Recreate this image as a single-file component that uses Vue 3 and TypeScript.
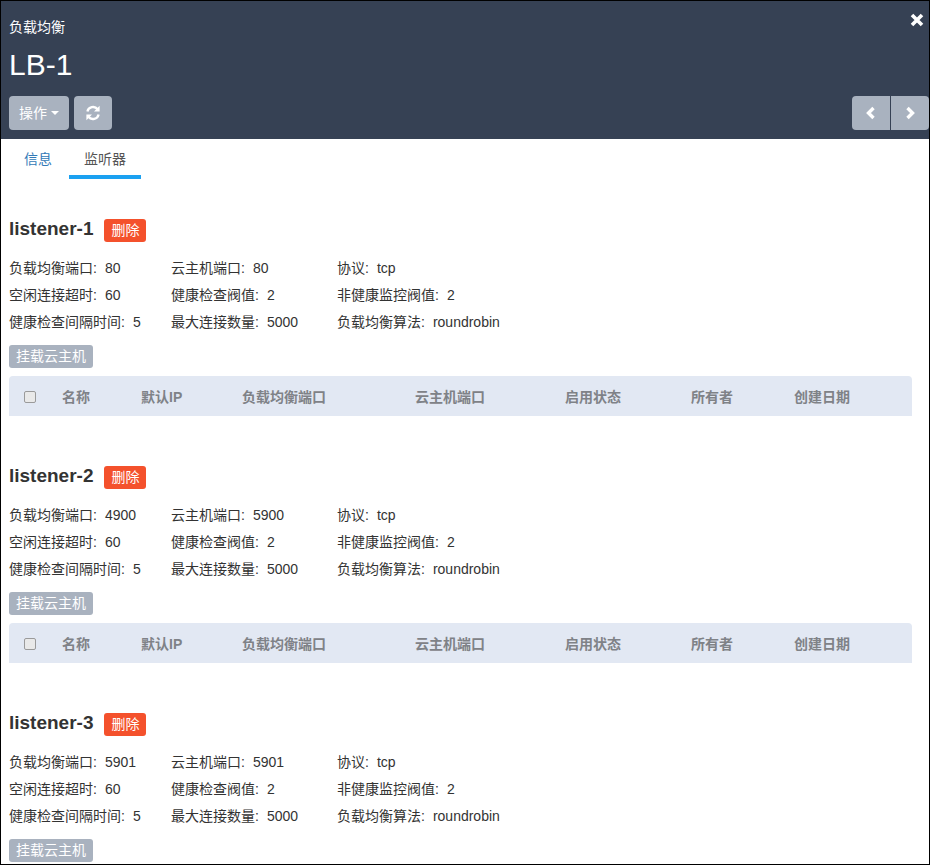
<script setup lang="ts">
interface Listener {
  name: string
  lbPort: number
  hostPort: number
  showHeader: boolean
}
const listeners: Listener[] = [
  { name: 'listener-1', lbPort: 80, hostPort: 80, showHeader: true },
  { name: 'listener-2', lbPort: 4900, hostPort: 5900, showHeader: true },
  { name: 'listener-3', lbPort: 5901, hostPort: 5901, showHeader: false },
]
const columns = ['名称', '默认IP', '负载均衡端口', '云主机端口', '启用状态', '所有者', '创建日期']
function rows(l: Listener): [string, string | number][] {
  return [
    ['负载均衡端口', l.lbPort],
    ['云主机端口', l.hostPort],
    ['协议', 'tcp'],
    ['空闲连接超时', 60],
    ['健康检查阀值', 2],
    ['非健康监控阀值', 2],
    ['健康检查间隔时间', 5],
    ['最大连接数量', 5000],
    ['负载均衡算法', 'roundrobin'],
  ]
}
</script>

<template>
  <div class="panel">
    <header class="head">
      <div class="kicker">负载均衡</div>
      <svg class="close" viewBox="0 0 14 14" width="14" height="14">
        <path d="M2 2 L12 12 M12 2 L2 12" stroke="#fff" stroke-width="3.6" fill="none" />
      </svg>
      <h1 class="title">LB-1</h1>
      <div class="toolbar">
        <div class="group">
          <button class="btn action"><span class="lift">操作</span><span class="caret"></span></button>
          <button class="btn refresh">
            <svg viewBox="0 0 16 16" width="16" height="16" fill="none" stroke="#fff" stroke-width="2.3">
              <path d="M2.4 6.6 A5.8 5.8 0 0 1 12.6 4.2" />
              <path d="M13.6 9.4 A5.8 5.8 0 0 1 3.4 11.8" />
              <path d="M14.6 0.8 V6.4 H9 Z" fill="#fff" stroke="none" />
              <path d="M1.4 15.2 V9.6 H7 Z" fill="#fff" stroke="none" />
            </svg>
          </button>
        </div>
        <div class="pager">
          <button class="btn nav">
            <svg viewBox="0 0 12 14" width="12" height="14" fill="none" stroke="#fff" stroke-width="3.4">
              <path d="M8.5 2 L3.5 7 L8.5 12" />
            </svg>
          </button>
          <button class="btn nav">
            <svg viewBox="0 0 12 14" width="12" height="14" fill="none" stroke="#fff" stroke-width="3.4">
              <path d="M3.5 2 L8.5 7 L3.5 12" />
            </svg>
          </button>
        </div>
      </div>
    </header>

    <nav class="tabs">
      <a class="tab">信息</a>
      <a class="tab active">监听器</a>
    </nav>

    <section v-for="l in listeners" :key="l.name" class="listener">
      <div class="name-row">
        <h2 class="name">{{ l.name }}</h2>
        <button class="del">删除</button>
      </div>
      <div class="facts">
        <div v-for="r in rows(l)" :key="r[0]" class="fact">{{ r[0] }}:<span class="val">{{ r[1] }}</span></div>
      </div>
      <button class="attach">挂载云主机</button>
      <div v-if="l.showHeader" class="thead">
        <div class="cell check"><span class="box"></span></div>
        <div v-for="c in columns" :key="c" class="cell th">{{ c }}</div>
      </div>
    </section>
  </div>
</template>

<style>
html, body { margin: 0; overflow: hidden; background: #fff; }
</style>

<style scoped>
.panel {
  box-sizing: border-box;
  width: 930px;
  height: 865px;
  border: 1px solid #000;
  overflow: hidden;
  background: #fff;
  color: #333;
  font-family: "Liberation Sans", "Noto Sans CJK SC", sans-serif;
  font-size: 14px;
}
.head {
  position: relative;
  height: 138px;
  box-sizing: border-box;
  padding: 17px 0 0 8px;
  background: #364154;
  color: #fff;
}
.kicker { font-size: 14px; line-height: 19px; }
.close { position: absolute; top: 12px; right: 5px; }
.title {
  margin: 8px 0 0;
  font-size: 30px;
  font-weight: 400;
  line-height: 40px;
}
.toolbar {
  margin-top: 11px;
  display: flex;
  justify-content: space-between;
}
.group { display: flex; gap: 5px; }
.pager { display: flex; gap: 1px; background: #364154; }
.btn {
  display: flex;
  align-items: center;
  justify-content: center;
  height: 34px;
  border: 0;
  padding: 0;
  border-radius: 4px;
  background: #a9b2bf;
  color: #fff;
  font: inherit;
  font-size: 14px;
}
.lift { margin-bottom: 2px; }
.action { width: 60px; }
.caret {
  margin-left: 4px;
  border-top: 4px solid #fff;
  border-left: 4px solid transparent;
  border-right: 4px solid transparent;
}
.refresh { width: 38px; }
.nav { width: 38px; }
.nav:first-child { border-radius: 4px 0 0 4px; }
.nav:last-child { border-radius: 0 4px 4px 0; }
.tabs {
  display: flex;
  height: 40px;
  padding-left: 8px;
}
.tab {
  box-sizing: border-box;
  height: 40px;
  padding: 10px 15px 0;
  line-height: 20px;
  color: #337ab7;
  font-size: 14px;
}
.tab:first-child { width: 60px; }
.active {
  width: 72px;
  color: #555;
  border-bottom: 4px solid #1ba1f1;
}
.listener {
  height: 247px;
  padding: 39px 17px 0 8px;
  box-sizing: border-box;
}
.name-row {
  display: flex;
  align-items: center;
  height: 24px;
}
.name {
  margin: 0 0 3px;
  font-size: 19px;
  font-weight: 700;
  line-height: 24px;
  color: #333;
}
.del {
  margin-left: 11px;
  width: 42px;
  height: 23px;
  padding: 0 0 2px;
  border: 0;
  border-radius: 3px;
  background: #f4512c;
  color: #fff;
  font: inherit;
  font-size: 14px;
}
.facts {
  margin-top: 13px;
  display: grid;
  grid-template-columns: 162px 166px auto;
  grid-auto-rows: 27px;
}
.fact {
  line-height: 27px;
  font-size: 14px;
  white-space: nowrap;
}
.val { margin-left: 8px; }
.attach {
  display: block;
  margin-top: 9px;
  width: 84px;
  height: 23px;
  padding: 0 0 4px;
  border: 0;
  border-radius: 3px;
  background: #a9b2bf;
  color: #fff;
  font: inherit;
  font-size: 14px;
}
.thead {
  margin-top: 8px;
  width: 903px;
  height: 40px;
  background: #e2e8f3;
  border-radius: 4px 4px 0 0;
  display: grid;
  grid-template-columns: 53px 79px 101px 173px 150px 126px 103px 118px;
  align-items: center;
}
.cell { font-size: 14px; font-weight: 700; color: #7f8287; white-space: nowrap; }
.th { padding-bottom: 1px; }
.check { padding: 1px 0 0 15px; display: flex; }
.box {
  box-sizing: border-box;
  width: 12px;
  height: 12px;
  border: 1px solid #9a9a9a;
  border-radius: 2px;
  background: #e9e9e9;
}
</style>
